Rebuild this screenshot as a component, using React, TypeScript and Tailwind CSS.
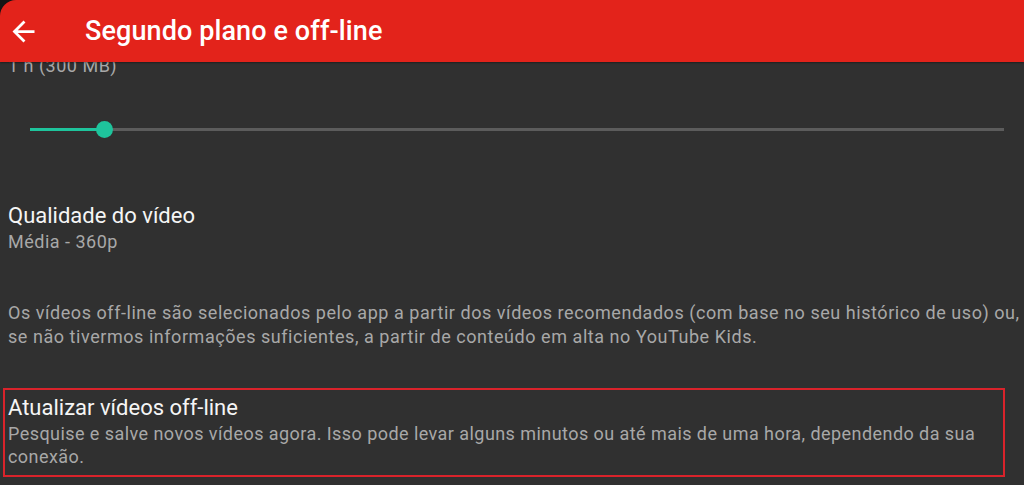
export default function App() {
  return (
    <div
      className="h-[485px] w-full overflow-hidden bg-[#151515] flex flex-col"
      style={{ fontFamily: 'Roboto, "Noto Sans", sans-serif' }}
    >
      {/* Barra superior */}
      <header className="h-[62px] shrink-0 bg-[#e3231b] rounded-tl-[16px] flex items-center pl-[7px] relative z-10 shadow-[0_1px_2px_rgba(0,0,0,0.35)]">
        <svg width="33" height="33" viewBox="0 0 24 24" fill="#ffffff">
          <path d="M20 11H7.83l5.59-5.59L12 4l-8 8 8 8 1.41-1.41L7.83 13H20v-2z" />
        </svg>
        <h1 className="ml-[45px] text-[27px] leading-none font-medium text-white tracking-[0.1px]">
          Segundo plano e off-line
        </h1>
      </header>

      <main className="flex-1 bg-[#303030] overflow-hidden">
        <div className="-mt-[8px] pl-2 pr-[2px]">
          <p className="text-[18px] leading-[24px] tracking-[0.5px] text-[#a8a8a8]">1 h (300 MB)</p>

          {/* Slider */}
          <div className="mt-[43px] h-4 ml-[22px] mr-[18px] flex items-center">
            <div className="h-[3px] w-[74px] bg-[#1ec49c]" />
            <div className="h-[17px] w-[17px] -mx-[8px] rounded-full bg-[#1ec49c] relative z-10" />
            <div className="h-[3px] flex-1 bg-[#5c5c5c]" />
          </div>

          <div className="mt-[65px]">
            <p className="text-[22px] leading-[28px] text-[#f5f5f5]">Qualidade do vídeo</p>
            <p className="text-[18px] leading-[24px] tracking-[0.5px] text-[#a8a8a8]">Média - 360p</p>
          </div>

          <p className="mt-[47px] text-[18px] leading-[24px] tracking-[0.55px] text-[#a8a8a8]">
            Os vídeos off-line são selecionados pelo app a partir dos vídeos recomendados (com base no seu
            histórico de uso) ou, se não tivermos informações suficientes, a partir de conteúdo em alta no
            YouTube Kids.
          </p>

          <div className="mt-[39px] -ml-[5px] mr-[17px] border-2 border-[#d9232b] pl-[3px] pt-[4px] pb-[7px]">
            <p className="text-[22px] leading-[28px] text-[#f5f5f5]">Atualizar vídeos off-line</p>
            <p className="text-[18px] leading-[23px] tracking-[0.44px] text-[#a8a8a8]">
              Pesquise e salve novos vídeos agora. Isso pode levar alguns minutos ou até mais de uma hora,
              dependendo da sua conexão.
            </p>
          </div>
        </div>
      </main>
    </div>
  )
}
